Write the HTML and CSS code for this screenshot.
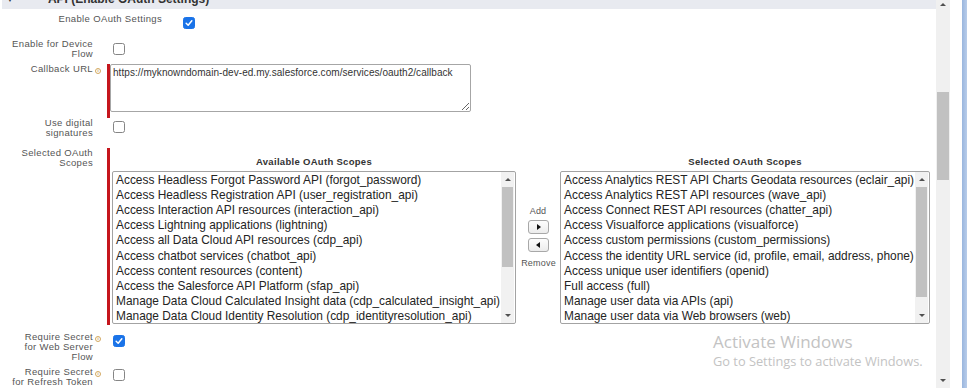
FILE: index.html
```html
<!DOCTYPE html>
<html lang="en">
<head>
<meta charset="utf-8">
<title>API (Enable OAuth Settings)</title>
<link rel="stylesheet" href="styles.css">
</head>
<body>
<div class="screen">
  <div class="page">
    <div class="section-head">
      <span class="caret">&#9660;</span>
      <span class="section-title">API (Enable OAuth Settings)</span>
    </div>
    <div class="rows">
      <div class="row row-oauth">
        <div class="label">Enable OAuth Settings</div>
        <div class="field"><span class="cb checked"><svg viewBox="0 0 12 12"><path d="M2.6 6.3 L5 8.6 L9.4 3.4" fill="none" stroke="#fff" stroke-width="1.8" stroke-linecap="round" stroke-linejoin="round"/></svg></span></div>
      </div>
      <div class="row row-device">
        <div class="label">Enable for Device<br>Flow</div>
        <div class="field"><span class="cb"></span></div>
      </div>
      <div class="row row-callback">
        <div class="label">Callback URL<span class="info">i</span></div>
        <div class="field required">
          <textarea class="url" spellcheck="false">https://myknowndomain-dev-ed.my.salesforce.com/services/oauth2/callback</textarea>
        </div>
      </div>
      <div class="row row-digital">
        <div class="label">Use digital<br>signatures</div>
        <div class="field"><span class="cb"></span></div>
      </div>
      <div class="row row-scopes">
        <div class="label">Selected OAuth<br>Scopes</div>
        <div class="field required scopes">
          <div class="picker">
            <div class="pick-col col-avail">
              <div class="pick-head">Available OAuth Scopes</div>
              <div class="listbox">
                <div class="items">
                  <div>Access Headless Forgot Password API (forgot_password)</div>
                  <div>Access Headless Registration API (user_registration_api)</div>
                  <div>Access Interaction API resources (interaction_api)</div>
                  <div>Access Lightning applications (lightning)</div>
                  <div>Access all Data Cloud API resources (cdp_api)</div>
                  <div>Access chatbot services (chatbot_api)</div>
                  <div>Access content resources (content)</div>
                  <div>Access the Salesforce API Platform (sfap_api)</div>
                  <div>Manage Data Cloud Calculated Insight data (cdp_calculated_insight_api)</div>
                  <div>Manage Data Cloud Identity Resolution (cdp_identityresolution_api)</div>
                </div>
                <div class="lscroll">
                  <span class="arr up"></span>
                  <span class="lthumb thumb-avail"></span>
                  <span class="arr down"></span>
                </div>
              </div>
            </div>
            <div class="pick-mid">
              <div class="mid-text">Add</div>
              <div class="mbtn"><span class="tri right"></span></div>
              <div class="mbtn"><span class="tri left"></span></div>
              <div class="mid-text remove">Remove</div>
            </div>
            <div class="pick-col col-sel">
              <div class="pick-head">Selected OAuth Scopes</div>
              <div class="listbox">
                <div class="items">
                  <div>Access Analytics REST API Charts Geodata resources (eclair_api)</div>
                  <div>Access Analytics REST API resources (wave_api)</div>
                  <div>Access Connect REST API resources (chatter_api)</div>
                  <div>Access Visualforce applications (visualforce)</div>
                  <div>Access custom permissions (custom_permissions)</div>
                  <div>Access the identity URL service (id, profile, email, address, phone)</div>
                  <div>Access unique user identifiers (openid)</div>
                  <div>Full access (full)</div>
                  <div>Manage user data via APIs (api)</div>
                  <div>Manage user data via Web browsers (web)</div>
                </div>
                <div class="lscroll">
                  <span class="arr up"></span>
                  <span class="lthumb thumb-sel"></span>
                  <span class="arr down"></span>
                </div>
              </div>
            </div>
          </div>
        </div>
      </div>
      <div class="row row-websecret">
        <div class="label">Require Secret<span class="info">i</span><br>for Web Server<br>Flow</div>
        <div class="field"><span class="cb checked"><svg viewBox="0 0 12 12"><path d="M2.6 6.3 L5 8.6 L9.4 3.4" fill="none" stroke="#fff" stroke-width="1.8" stroke-linecap="round" stroke-linejoin="round"/></svg></span></div>
      </div>
      <div class="row row-refresh">
        <div class="label">Require Secret<span class="info">i</span><br>for Refresh Token</div>
        <div class="field"><span class="cb"></span></div>
      </div>
    </div>
  </div>
  <div class="vscroll">
    <span class="arr up"></span>
    <span class="vthumb"></span>
    <span class="arr down bottom"></span>
  </div>
  <div class="gutter"></div>
  <div class="edge"></div>
  <div class="watermark">
    <div class="wm-title">Activate Windows</div>
    <div class="wm-sub">Go to Settings to activate Windows.</div>
  </div>
</div>
</body>
</html>
```

FILE: styles.css
```css
* { box-sizing: border-box; }
html, body { margin: 0; padding: 0; background: #fff; }
body {
  width: 967px;
  height: 388px;
  overflow: hidden;
  font-family: "Liberation Sans", Arial, sans-serif;
}
.screen {
  position: relative;
  display: flex;
  height: 388px;
}
.page {
  width: 936px;
  height: 388px;
  overflow: hidden;
}
.section-head {
  margin-left: 2px;
  height: 9px;
  background: #e8eaf0;
  overflow: hidden;
  display: flex;
  align-items: flex-start;
}
.caret {
  font-size: 8px;
  color: #333;
  margin: -5px 0 0 4px;
  line-height: 10px;
}
.section-title {
  font-size: 12px;
  font-weight: bold;
  color: #333;
  line-height: 12px;
  margin: -7px 0 0 34px;
}
.rows { padding-top: 5px; }
.row {
  display: grid;
  grid-template-columns: 107px 1fr;
}
.label {
  text-align: right;
  padding-right: 14px;
  font-size: 9.5px;
  line-height: 9.6px;
  letter-spacing: 0.35px;
  color: #555;
}
.info {
  display: inline-block;
  width: 6px;
  height: 6px;
  border-radius: 50%;
  border: 1px solid #d3a860;
  color: #c08a30;
  font-size: 4px;
  line-height: 4px;
  text-align: center;
  font-weight: bold;
  margin-left: 2px;
  margin-right: -8px;
  letter-spacing: 0;
  vertical-align: 0;
}
.field { display: flex; align-items: flex-start; }
.cb {
  display: inline-block;
  width: 12px;
  height: 12px;
  margin-left: 6px;
  border: 1px solid #858585;
  border-radius: 2.5px;
  background: #fff;
}
.cb.checked {
  background: #1a73e8;
  border-color: #1a73e8;
}
.cb svg { display: block; width: 10px; height: 10px; }

.row-oauth { grid-template-columns: 176px 1fr; height: 25px; }
.row-oauth .label { padding-right: 14px; line-height: 10px; }
.row-oauth .cb { margin-top: 3px; margin-left: 7px; }

.row-device { height: 25px; }
.row-device .cb { margin-top: 3.5px; }

.row-callback { height: 54px; }
.required { border-left: 3px solid #c5161d; }
.url {
  display: block;
  width: 361px;
  height: 48px;
  margin: 0;
  padding: 2px;
  border: 1px solid #a6a6a6;
  border-radius: 2px;
  font-family: "Liberation Sans", Arial, sans-serif;
  font-size: 10px;
  letter-spacing: 0.05px;
  line-height: 11px;
  color: #333;
  resize: both;
  background: #fff;
}

.row-digital { height: 30px; }
.row-digital .cb { margin-top: 2.8px; }

.row-scopes { height: 184px; }
.scopes {
  height: 177px;
  padding-left: 2px;
}
.picker { display: flex; }
.pick-col { display: flex; flex-direction: column; }
.col-avail { width: 404px; }
.col-sel { width: 370px; }
.pick-head {
  height: 23px;
  padding-top: 8.5px;
  text-align: center;
  font-size: 9.5px;
  line-height: 10px;
  font-weight: bold;
  letter-spacing: 0.3px;
  color: #333;
}
.listbox {
  position: relative;
  height: 153px;
  border: 1px solid #a3a3a3;
  border-radius: 2px;
  display: flex;
  overflow: hidden;
}
.items {
  flex: 1;
  padding: 0.5px 0 0 3px;
  font-size: 11.9px;
  line-height: 15.2px;
  color: #242424;
  white-space: nowrap;
  overflow: hidden;
}
.lscroll {
  width: 13px;
  margin-right: 1px;
  background: #f1f1f1;
  display: flex;
  flex-direction: column;
  align-items: center;
}
.arr {
  display: block;
  width: 0;
  height: 0;
  border-left: 3px solid transparent;
  border-right: 3px solid transparent;
}
.arr.up { border-bottom: 3px solid #505050; margin-top: 6px; }
.arr.down { border-top: 3px solid #505050; margin-top: auto; margin-bottom: 6px; }
.lthumb {
  display: block;
  width: 11px;
  background: #c1c1c1;
  margin-top: 6px;
}
.thumb-avail { height: 80px; }
.thumb-sel { height: 110px; }

.pick-mid {
  width: 44px;
  padding-top: 58px;
  display: flex;
  flex-direction: column;
  align-items: center;
}
.mid-text {
  font-size: 9px;
  line-height: 10px;
  color: #555;
  letter-spacing: 0.2px;
}
.remove { margin-top: 6px; margin-left: 1px; }
.mbtn {
  width: 21px;
  height: 14px;
  margin-top: 4px;
  border: 1px solid #a8a8a8;
  border-radius: 3px;
  background: linear-gradient(#fdfdfd, #ececec);
  display: flex;
  align-items: center;
  justify-content: center;
}
.tri { display: block; width: 0; height: 0; border-top: 3.5px solid transparent; border-bottom: 3.5px solid transparent; }
.tri.right { border-left: 4px solid #111; margin-left: 1px; }
.tri.left { border-right: 4px solid #111; margin-right: 1px; }

.row-websecret { height: 35px; }
.row-websecret .cb { margin-top: 3px; }
.row-refresh { height: 21px; }
.row-refresh .cb { margin-top: 2px; }

.vscroll {
  width: 14px;
  height: 388px;
  background: #f0f0f0;
  display: flex;
  flex-direction: column;
  align-items: center;
}
.vscroll .arr.up { margin-top: 3px; }
.vscroll .arr.down { margin-bottom: 6px; }
.vthumb {
  display: block;
  width: 12px;
  height: 88px;
  margin-top: 86px;
  background: #c1c1c1;
}
.gutter { width: 12px; background: #fff; }
.edge {
  flex: 1;
  background: linear-gradient(90deg, #9ab6de, #b9cdea);
}
.watermark {
  position: absolute;
  left: 713px;
  top: 331px;
  color: #c3c3c3;
  font-family: "Open Sans", "Noto Sans", sans-serif;
}
.wm-title { font-size: 17px; line-height: 22px; }
.wm-sub { font-size: 12.8px; line-height: 17px; }
```
